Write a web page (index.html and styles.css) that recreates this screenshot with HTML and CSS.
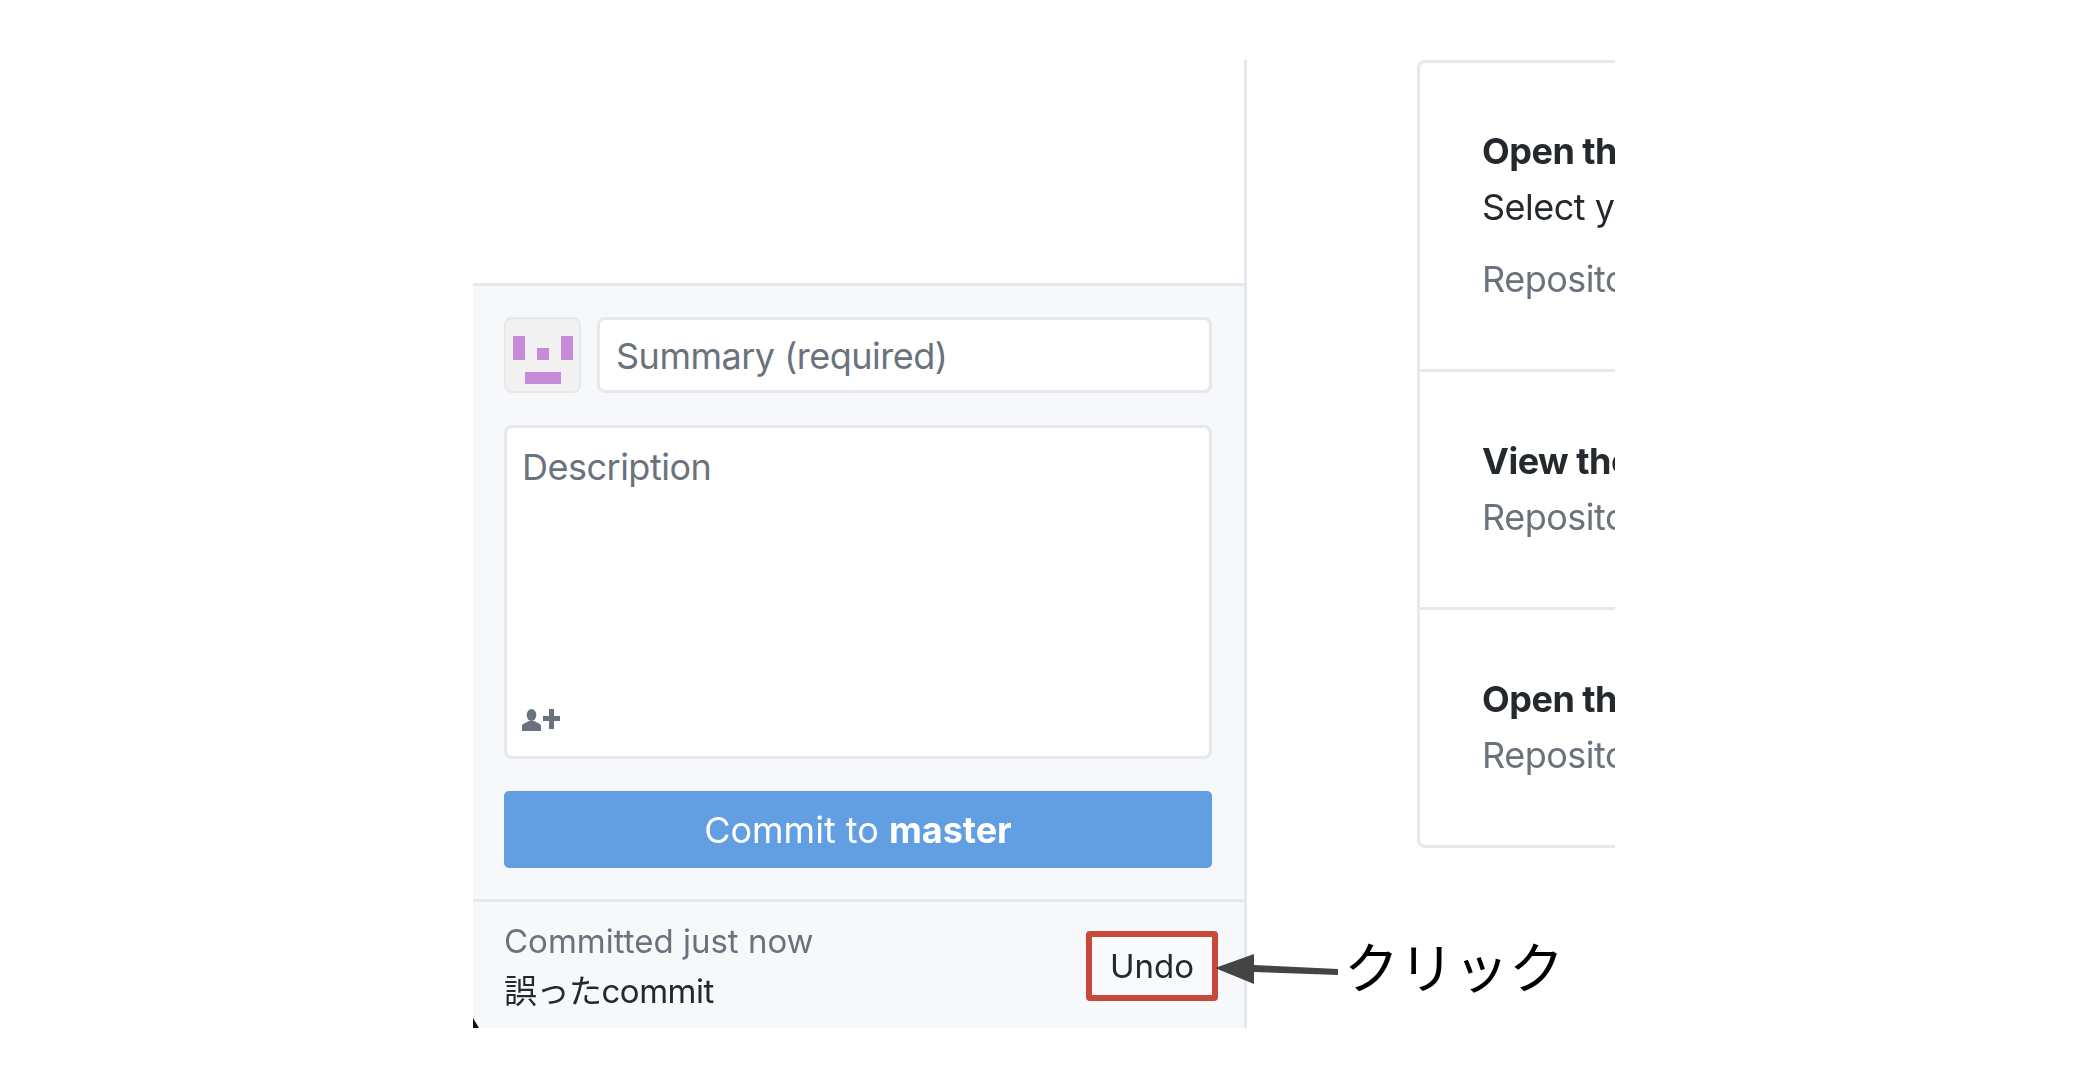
FILE: index.html
```html
<!DOCTYPE html>
<html lang="ja">
<head>
    <meta charset="UTF-8">
    <meta name="viewport" content="width=device-width, initial-scale=1.0">
    <title>Undo commit</title>
    <link rel="stylesheet" href="styles.css">
</head>
<body>

    <div class="shot">
        <div class="sidebar">
            <div class="changes"></div>

            <div class="commit-form">
                <div class="summary-row">
                    <div class="avatar">
                        <svg width="73" height="72" viewBox="0 0 73 72">
                            <rect x="7" y="17" width="12" height="24" fill="#c58bd8"/>
                            <rect x="31" y="29" width="12" height="12" fill="#c58bd8"/>
                            <rect x="55" y="17" width="12" height="24" fill="#c58bd8"/>
                            <rect x="19" y="53" width="36" height="12" fill="#c58bd8"/>
                        </svg>
                    </div>
                    <div class="field summary">Summary (required)</div>
                </div>
                <div class="field description">
                    <div>Description</div>
                    <svg class="coauthor" width="38" height="22" viewBox="0 0 38 22">
                        <ellipse cx="9.5" cy="6" rx="4.8" ry="6" fill="#6a737d"/>
                        <path d="M0 22v-5c0-2 3-3 5-4l2-1h5l2 1c2 1 5 2 5 4v5z" fill="#6a737d"/>
                        <path d="M27 0h5v7h6v5h-6v8h-5v-8h-6V7h6z" fill="#6a737d"/>
                    </svg>
                </div>
                <button class="commit-button">Commit to <b>master</b></button>
            </div>

            <div class="undo-bar">
                <div class="undo-text">
                    <div class="undo-time">Committed just now</div>
                    <div class="undo-msg">誤ったcommit</div>
                </div>
                <button class="undo-button">Undo</button>
            </div>
        </div>

        <div class="blank">
            <div class="card">
                <div class="card-row first">
                    <div class="row-title">Open the repository in your external editor</div>
                    <div class="row-text">Select your editor in Preferences</div>
                    <div class="row-hint hint-gap">Repository menu or ⇧⌘A</div>
                </div>
                <div class="card-row second">
                    <div class="row-title">View the files of your repository in Finder</div>
                    <div class="row-hint">Repository menu or ⇧⌘F</div>
                </div>
                <div class="card-row third">
                    <div class="row-title">Open the repository page on GitHub in your browser</div>
                    <div class="row-hint">Repository menu or ⇧⌘G</div>
                </div>
            </div>
        </div>
    </div>

    <!-- window corner left over from the capture -->
    <svg class="corner" width="6" height="10" viewBox="0 0 6 10"><path d="M0 0l6 10H0z" fill="#111"/></svg>

    <!-- annotation on top of the screenshot -->
    <svg class="arrow" width="124" height="30" viewBox="0 0 124 30">
        <path d="M0 14L39 0v11l84 4v6l-84-3v12z" fill="#444"/>
    </svg>
    <div class="click-label">クリック</div>

</body>
</html>
```

FILE: styles.css
```css
body {
    margin: 0;
    background: #ffffff;
    font-family: 'Inter', 'Noto Sans CJK JP', sans-serif;
    color: #24292e;
}
/* the source is an upscaled capture, so everything in it is a little soft */
.shot {
    display: flex;
    width: 1142px;
    height: 968px;
    margin: 60px 0 0 473px;
    overflow: hidden;
    filter: blur(0.5px);
}
.sidebar {
    display: flex;
    flex-direction: column;
    flex: none;
    width: 771px;
    border-right: 3px solid #e5e8ec;
}
.changes {
    height: 223px;
    border-bottom: 3px solid #e5e8ec;
}
.commit-form {
    display: flex;
    flex-direction: column;
    gap: 32px;
    padding: 31px 32px 31px 31px;
    background: #f6f8fa;
}
.summary-row {
    display: flex;
    gap: 16px;
}
.avatar {
    flex: none;
    width: 73px;
    height: 72px;
    border: 2px solid #e5e8ec;
    border-radius: 8px;
    background: #f1f1f1;
    overflow: hidden;
}
.avatar svg {
    display: block;
}
.field {
    box-sizing: border-box;
    border: 3px solid #e5e8ec;
    border-radius: 8px;
    background: #ffffff;
    color: #6a737d;
    font-size: 36px;
    letter-spacing: -0.5px;
    padding: 0 16px;
}
.summary {
    flex: 1;
    height: 76px;
    line-height: 72px;
}
.description {
    display: flex;
    flex-direction: column;
    justify-content: space-between;
    height: 334px;
    padding: 17px 15px 25px;
    line-height: 44px;
}
.coauthor {
    display: block;
}
.commit-button {
    height: 77px;
    border: none;
    border-radius: 5px;
    background: #629fe2;
    color: #ffffff;
    font-family: inherit;
    font-size: 36px;
}
.undo-bar {
    display: flex;
    flex: 1;
    justify-content: space-between;
    align-items: flex-start;
    padding: 17px 26px 0 31px;
    border-top: 3px solid #e5e8ec;
    background: #f6f8fa;
}
.undo-time {
    color: #6a737d;
    font-size: 33px;
    line-height: 44px;
}
.undo-msg {
    margin-top: 6px;
    font-size: 33px;
    letter-spacing: -0.5px;
    line-height: 44px;
}
.undo-button {
    box-sizing: border-box;
    width: 132px;
    height: 70px;
    margin-top: 12px;
    border: 6px solid #c9483c;
    border-radius: 4px;
    background: #f9fafc;
    color: #24292e;
    font-family: inherit;
    font-size: 33px;
}
.blank {
    flex: 1;
    padding-left: 170px;
    min-width: 0;
}
.card {
    width: 900px;
    height: 788px;
    box-sizing: border-box;
    border: 3px solid #e5e8ec;
    border-radius: 8px;
}
.card-row {
    box-sizing: border-box;
    padding-left: 62px;
    white-space: nowrap;
    font-size: 36px;
    letter-spacing: -0.5px;
    line-height: 44px;
}
.card-row.first {
    height: 306px;
    padding-top: 66px;
}
.card-row.second {
    height: 238px;
    padding-top: 67px;
    border-top: 3px solid #e5e8ec;
}
.card-row.third {
    padding-top: 67px;
    border-top: 3px solid #e5e8ec;
}
.row-title {
    font-weight: 700;
}
.row-text {
    margin-top: 12px;
}
.row-hint {
    margin-top: 12px;
    color: #6a737d;
}
.row-hint.hint-gap {
    margin-top: 28px;
}
.corner {
    position: absolute;
    left: 473px;
    top: 1018px;
}
.arrow {
    position: absolute;
    left: 1215px;
    top: 954px;
}
.click-label {
    position: absolute;
    left: 1344px;
    top: 928px;
    font-size: 55px;
    line-height: 80px;
    color: #000000;
    white-space: nowrap;
}
```
